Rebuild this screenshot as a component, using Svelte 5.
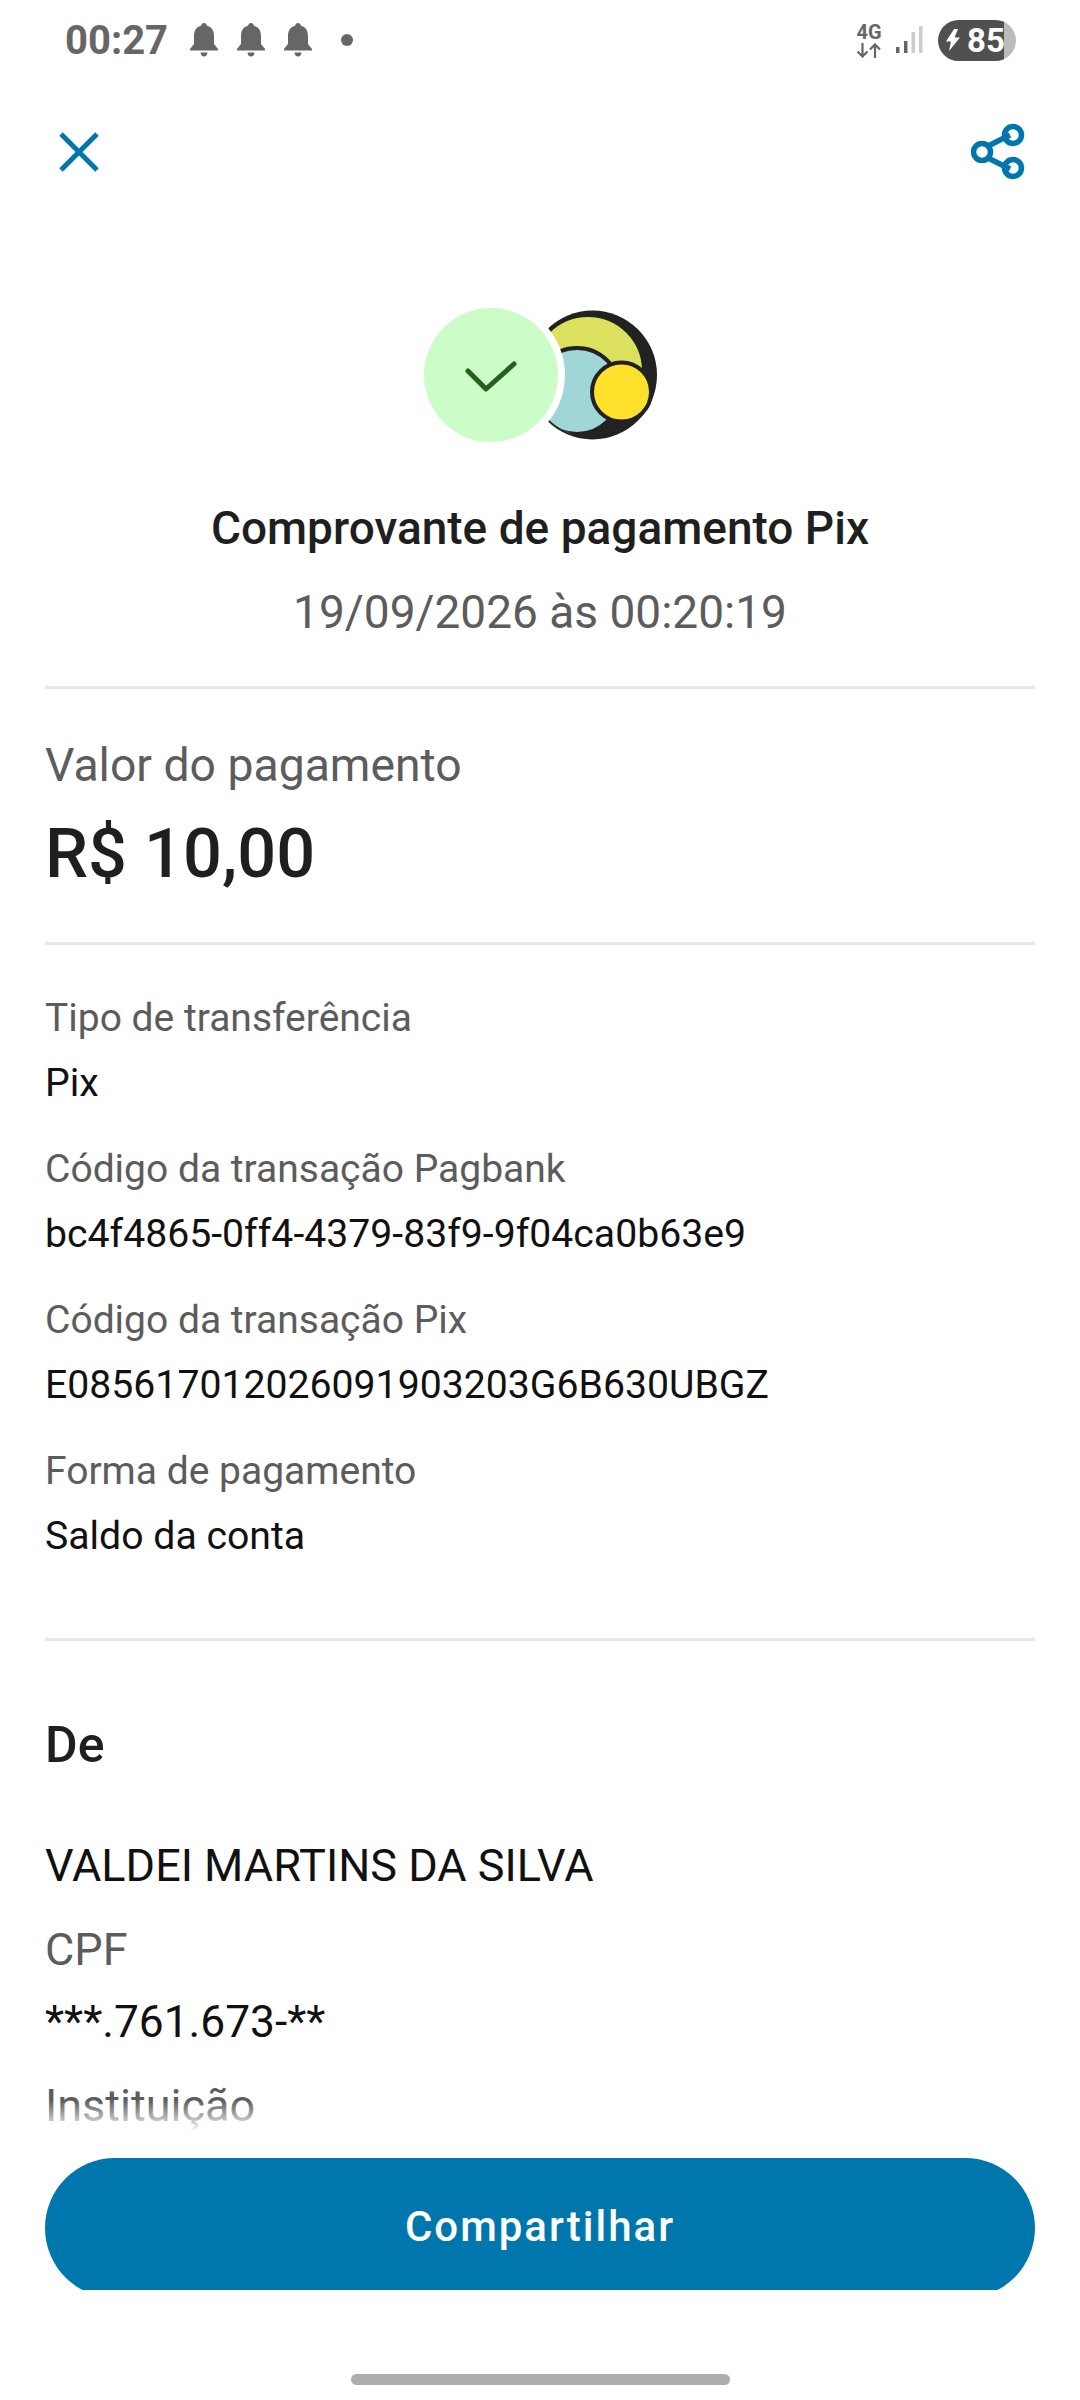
<script>
  const rows = [
    { label: 'Tipo de transferência', value: 'Pix' },
    { label: 'Código da transação Pagbank', value: 'bc4f4865-0ff4-4379-83f9-9f04ca0b63e9' },
    { label: 'Código da transação Pix', value: 'E085617012026091903203G6B630UBGZ' },
    { label: 'Forma de pagamento', value: 'Saldo da conta' },
  ];
  const bells = [0, 1, 2];
</script>

<div class="screen">
  <div class="status">
    <div class="status-left">
      <span class="time">00:27</span>
      <div class="bells">
        {#each bells as b}
          <svg width="28" height="34" viewBox="0 0 28 34">
            <path fill="#666" d="M14 0c1.6 0 2.6 1 2.7 2.6C21.800 4 24 8 24 13v8l4 5v1.500H0V26l4-5v-8c0-5 2.200-9 7.300-10.400C11.400 1 12.400 0 14 0z"/>
            <path fill="#666" d="M10.500 29.500h7C17.300 32 16 33.500 14 33.500s-3.300-1.500-3.500-4z"/>
          </svg>
        {/each}
      </div>
      <span class="dot"></span>
    </div>
    <div class="status-right">
      <div class="net">
        <span>4G</span>
        <svg width="26" height="15" viewBox="0 0 26 15">
          <path d="M6.500 0v13M1.500 8.500l5 5 5-5M19 15V2M14 6.500l5-5 5 5" fill="none" stroke="#666" stroke-width="2.200"/>
        </svg>
      </div>
      <svg class="signal" width="27" height="28" viewBox="0 0 27 28">
        <rect x="0" y="21" width="3.500" height="6" fill="#666"/>
        <rect x="8" y="15" width="3.500" height="12" fill="#666"/>
        <rect x="15.500" y="6" width="3.500" height="21" fill="#ccc"/>
        <rect x="23" y="0" width="3.500" height="27" fill="#ccc"/>
      </svg>
      <div class="battery">
        <svg width="14" height="22" viewBox="0 0 14 22">
          <path fill="#fff" d="M8 0L0 12.500h5L3 22l11-13.500H8.500L12 0z"/>
        </svg>
        <span>85</span>
      </div>
    </div>
  </div>

  <header class="top">
    <svg width="40" height="40" viewBox="0 0 40 40">
      <path d="M2 2l36 36M38 2L2 38" fill="none" stroke="#0077ac" stroke-width="5"/>
    </svg>
    <svg width="56" height="58" viewBox="0 0 56 58">
      <path d="M15 24l24-12M15 34l24 12" stroke="#0077ac" stroke-width="5.500"/>
      <circle cx="11" cy="29" r="8.500" fill="none" stroke="#0077ac" stroke-width="5.500"/>
      <circle cx="42" cy="12" r="8.500" fill="none" stroke="#0077ac" stroke-width="5.500"/>
      <circle cx="42" cy="45" r="8.500" fill="none" stroke="#0077ac" stroke-width="5.500"/>
    </svg>
  </header>

  <div class="content">
    <section class="receipt-head">
      <svg class="badge" width="236" height="140" viewBox="423 305 236 140">
        <defs>
          <clipPath id="logo"><circle cx="593.500" cy="375" r="62.500"/></clipPath>
        </defs>
        <circle cx="593.500" cy="375" r="64.500" fill="#222"/>
        <g clip-path="url(#logo)">
          <circle cx="589" cy="371" r="56" fill="#dbe05f" stroke="#222" stroke-width="4"/>
          <circle cx="578" cy="391" r="43" fill="#a0d6d8" stroke="#222" stroke-width="4"/>
        </g>
        <circle cx="622.500" cy="392" r="29.500" fill="#ffe02a" stroke="#222" stroke-width="4"/>
        <circle cx="492" cy="375" r="74" fill="#fff"/>
        <circle cx="492" cy="375" r="67" fill="#ccfcc8"/>
        <path d="M469 371l18 18 28-25" fill="none" stroke="#24611f" stroke-width="5" stroke-linecap="round" stroke-linejoin="round"/>
      </svg>
      <h1>Comprovante de pagamento Pix</h1>
      <p>19/09/2026 às 00:20:19</p>
    </section>

    <section class="amount">
      <span>Valor do pagamento</span>
      <strong>R$ 10,00</strong>
    </section>

    <section class="details">
      {#each rows as row}
        <div class="row">
          <span>{row.label}</span>
          <b>{row.value}</b>
        </div>
      {/each}
    </section>

    <section class="from">
      <h2>De</h2>
      <div class="name">VALDEI MARTINS DA SILVA</div>
      <div class="muted">CPF</div>
      <div class="name doc">***.761.673-**</div>
      <div class="muted">Instituição</div>
    </section>
    <div class="fade"></div>
  </div>

  <div class="footer">
    <div class="btn-clip">
      <button>Compartilhar</button>
    </div>
  </div>

  <div class="home"><span></span></div>
</div>

<style>
  :global(body) {
    margin: 0;
    background: #fff;
  }

  .screen {
    width: 1080px;
    height: 2400px;
    display: flex;
    flex-direction: column;
    font-family: Roboto, "Liberation Sans", sans-serif;
    color: #1f1f1f;
    overflow: hidden;
  }

  svg {
    display: block;
    flex: none;
  }

  /* Status bar */
  .status {
    height: 80px;
    display: flex;
    justify-content: space-between;
    align-items: center;
    padding: 0 64px 0 65px;
  }

  .status-left,
  .status-right,
  .bells {
    display: flex;
    align-items: center;
  }

  .time {
    font-size: 40px;
    font-weight: 700;
    color: #666;
    width: 125px;
  }

  .bells {
    gap: 19px;
  }

  .dot {
    width: 12px;
    height: 12px;
    border-radius: 50%;
    background: #666;
    margin-left: 29px;
  }

  .net {
    display: flex;
    flex-direction: column;
    align-items: center;
    gap: 2px;
    color: #666;
  }

  .net span {
    font-size: 20px;
    font-weight: 700;
    line-height: 18px;
  }

  .signal {
    margin-left: 14px;
  }

  .battery {
    width: 78px;
    height: 41px;
    margin-left: 15px;
    border-radius: 21px;
    background: linear-gradient(90deg, #505050 0 66px, #bbb 66px);
    display: flex;
    align-items: center;
    gap: 7px;
    padding-left: 8px;
    box-sizing: border-box;
    color: #fff;
    font-size: 33px;
    font-weight: 700;
  }

  /* Top actions */
  .top {
    height: 144px;
    display: flex;
    justify-content: space-between;
    align-items: center;
    padding: 0 53px 0 59px;
  }

  /* Scroll content */
  .content {
    height: 1908px;
    flex: none;
    position: relative;
    overflow: hidden;
    padding: 0 45px;
  }

  .fade {
    position: absolute;
    left: 0;
    right: 0;
    bottom: 0;
    height: 32px;
    background: linear-gradient(rgba(255, 255, 255, 0), #fff);
  }

  .receipt-head {
    padding-top: 81px;
    display: flex;
    flex-direction: column;
    align-items: center;
    border-bottom: 3px solid #e8e8e8;
    height: 465px;
    box-sizing: border-box;
  }

  h1 {
    margin: 55px 0 0;
    font-size: 46px;
    font-weight: 500;
    line-height: 56px;
  }

  .receipt-head p {
    margin: 28px 0 0;
    font-size: 46px;
    line-height: 56px;
    color: #5c5c5c;
  }

  .amount {
    height: 256px;
    box-sizing: border-box;
    padding-top: 48px;
    border-bottom: 3px solid #e8e8e8;
    display: flex;
    flex-direction: column;
  }

  .amount span {
    font-size: 46.300px;
    line-height: 56px;
    color: #5c5c5c;
  }

  .amount strong {
    font-size: 68.500px;
    font-weight: 500;
    line-height: 80px;
    margin-top: 21px;
  }

  .details {
    height: 696px;
    box-sizing: border-box;
    padding-top: 50px;
    border-bottom: 3px solid #e8e8e8;
  }

  .row {
    display: flex;
    flex-direction: column;
    height: 151px;
    font-size: 39px;
  }

  .row span {
    line-height: 46px;
    color: #5c5c5c;
  }

  .row b {
    font-weight: 400;
    font-size: 39.200px;
    line-height: 46px;
    margin-top: 19px;
    color: #111;
  }

  .from h2 {
    margin: 76px 0 0;
    font-size: 50px;
    font-weight: 500;
    line-height: 56px;
  }

  .name {
    font-size: 45px;
    line-height: 56px;
    color: #111;
    margin-top: 65px;
  }

  .muted {
    font-size: 45px;
    line-height: 56px;
    color: #5c5c5c;
    margin-top: 28px;
  }

  .name.doc {
    font-size: 44.300px;
    margin-top: 16px;
  }

  /* Footer button */
  .footer {
    padding: 0 45px;
    height: 132px;
    flex: none;
    margin-top: 26px;
  }

  .btn-clip {
    height: 132px;
    overflow: hidden;
  }

  button {
    width: 100%;
    height: 140px;
    border: none;
    border-radius: 70px;
    background: #0077ac;
    color: #fff;
    font-family: inherit;
    font-size: 42px;
    font-weight: 500;
    letter-spacing: 2px;
    padding: 0 0 4px;
  }

  .home {
    flex: 1;
    display: flex;
    justify-content: center;
    padding-top: 84px;
  }

  .home span {
    width: 379px;
    height: 11px;
    border-radius: 6px;
    background: #adadad;
  }
</style>
